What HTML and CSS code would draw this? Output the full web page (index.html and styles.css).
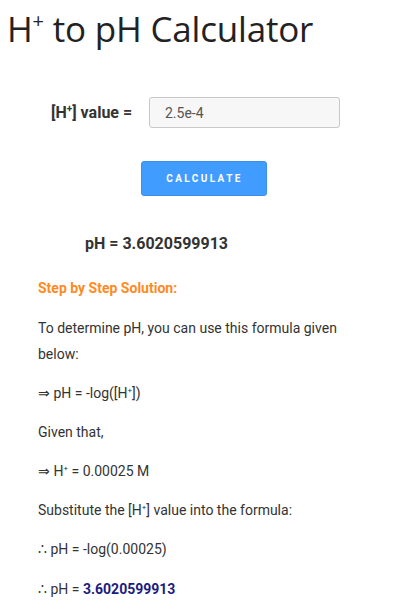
FILE: index.html
```html
<!DOCTYPE html>
<html>
<head>
<meta charset="utf-8">
<link rel="stylesheet" href="styles.css">
</head>
<body>
<h1 class="title">H<sup class="title-sup">+</sup> to pH Calculator</h1>
<div class="form-row">
  <label class="label">[H<sup class="sup">+</sup>] value =</label>
  <input class="input" type="text" value="2.5e-4">
</div>
<div class="btn-row">
  <button class="btn">CALCULATE</button>
</div>
<div class="result">pH = 3.6020599913</div>
<div class="steps">
  <p class="step-title">Step by Step Solution:</p>
  <p class="para">To determine pH, you can use this formula given below:</p>
  <p class="para">&rArr; pH = -log([H<sup class="sup-s">+</sup>])</p>
  <p class="para">Given that,</p>
  <p class="para">&rArr; H<sup class="sup-s">+</sup> = 0.00025 M</p>
  <p class="para">Substitute the [H<sup class="sup-s">+</sup>] value into the formula:</p>
  <p class="para">&there4; pH = -log(0.00025)</p>
  <p class="para">&there4; pH = <b class="answer">3.6020599913</b></p>
</div>
</body>
</html>
```
FILE: styles.css
```css
* { box-sizing: border-box; }
html, body { margin: 0; padding: 0; background: #fff; }
body {
  width: 410px;
  font-family: Roboto, "Liberation Sans", sans-serif;
  color: #333;
}
.title {
  margin: 0;
  padding: 8px 0 0 7px;
  font-family: "Open Sans", "Liberation Sans", sans-serif;
  font-weight: 500;
  font-size: 35px;
  line-height: 42px;
  color: #222;
  letter-spacing: -0.2px;
}
.title-sup {
  font-size: 20px;
  line-height: 0;
  vertical-align: 14px;
}
.form-row {
  display: flex;
  align-items: center;
  margin-top: 47px;
  padding-left: 51px;
}
.label {
  font-weight: 700;
  font-size: 16px;
  color: #333;
  width: 98px;
}
.sup {
  font-size: 10px;
  line-height: 0;
  vertical-align: 6px;
}
.input {
  width: 191px;
  height: 31px;
  border: 1px solid #c8c8c8;
  border-radius: 3px;
  background: #f7f7f7;
  padding: 0 15px;
  font-family: Roboto, "Liberation Sans", sans-serif;
  font-size: 14px;
  color: #555;
  outline: none;
}
.btn-row {
  display: flex;
  justify-content: center;
  margin-top: 33px;
  padding-right: 3px;
}
.btn {
  width: 126px;
  height: 35px;
  background: #419cff;
  border: 1px solid #3b8ee8;
  border-radius: 3px;
  color: #fff;
  font-family: Roboto, "Liberation Sans", sans-serif;
  font-weight: 700;
  font-size: 10px;
  letter-spacing: 2.4px;
  padding: 0 0 0 2px;
}
.result {
  margin-top: 37px;
  padding-left: 85px;
  font-weight: 700;
  font-size: 16px;
  line-height: 22px;
  color: #333;
}
.steps {
  padding: 0 30px 0 38px;
  margin-top: 20px;
}
.step-title {
  margin: 0 0 13.5px;
  color: #ff8a1f;
  font-weight: 700;
  font-size: 14px;
  line-height: 26px;
}
.para {
  margin: 0 0 13.2px;
  font-size: 14px;
  line-height: 26px;
  color: #333;
}
.sup-s {
  font-size: 8px;
  line-height: 0;
  vertical-align: 5px;
}
.answer {
  color: #1c1c80;
}
```
